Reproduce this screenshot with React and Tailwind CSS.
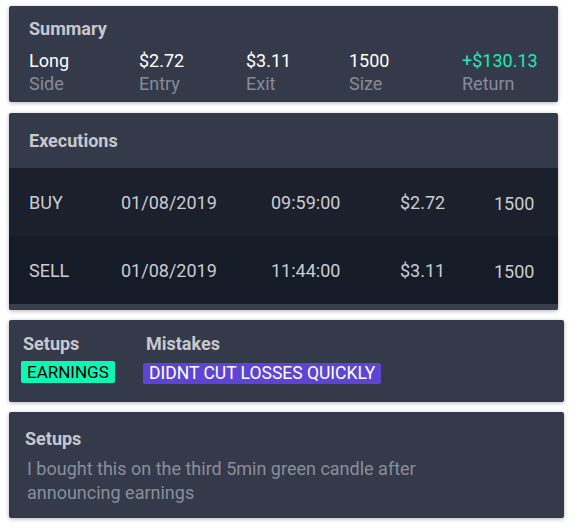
const SUMMARY = [
  { value: 'Long', label: 'Side' },
  { value: '$2.72', label: 'Entry' },
  { value: '$3.11', label: 'Exit' },
  { value: '1500', label: 'Size' },
  { value: '+$130.13', label: 'Return', positive: true },
];

const EXECUTIONS = [
  { side: 'BUY', date: '01/08/2019', time: '09:59:00', price: '$2.72', size: '1500', bg: 'bg-[#1c202c]' },
  { side: 'SELL', date: '01/08/2019', time: '11:44:00', price: '$3.11', size: '1500', bg: 'bg-[#161b28]' },
];

const card = 'bg-[#353a4a] rounded-[2px] shadow-[0_1px_4px_rgba(0,0,0,0.3)]';

export default function App() {
  return (
    <div
      className="min-h-screen bg-white pt-[6px] pl-[9px]"
      style={{ fontFamily: 'Roboto, "Liberation Sans", sans-serif' }}
    >
      {/* Summary */}
      <div className={`${card} w-[549px] h-[96px] px-5 pt-[11px]`}>
        <div className="text-[18px] leading-6 font-bold text-[#c6c8cd]">Summary</div>
        <div className="mt-2 grid grid-cols-[110px_107px_103px_113px_1fr]">
          {SUMMARY.map(item => (
            <div key={item.label}>
              <div className={`text-[18px] leading-6 ${item.positive ? 'text-[#1de9b6]' : 'text-white'}`}>
                {item.value}
              </div>
              <div className="text-[18px] leading-[22px] text-[#878b97]">{item.label}</div>
            </div>
          ))}
        </div>
      </div>

      {/* Executions */}
      <div className={`${card} w-[549px] mt-[11px] overflow-hidden`}>
        <div className="h-[55px] pl-5 flex items-center">
          <span className="text-[18px] font-bold text-[#c6c8cd]">Executions</span>
        </div>
        {EXECUTIONS.map(row => (
          <div
            key={row.side}
            className={`${row.bg} h-[68px] pl-5 grid grid-cols-[92px_150px_129px_94px_1fr] items-center text-[18px] text-[#c9ccd3]`}
          >
            <span>{row.side}</span>
            <span>{row.date}</span>
            <span>{row.time}</span>
            <span>{row.price}</span>
            <span className="pt-[2px]">{row.size}</span>
          </div>
        ))}
        <div className="h-[6px] bg-[#393e4d]" />
      </div>

      {/* Tags */}
      <div className={`${card} w-[555px] h-[82px] mt-[10px] pl-3 pt-3 flex`}>
        <div className="w-[122px]">
          <div className="ml-[2px] text-[18px] leading-6 font-bold text-[#c6c8cd]">Setups</div>
          <span className="mt-[5px] inline-block rounded-[2px] bg-[#0ff5b4] px-[6px] h-[22px] leading-[22px] text-[17px] text-black">
            EARNINGS
          </span>
        </div>
        <div>
          <div className="ml-[3px] text-[18px] leading-6 font-bold text-[#c6c8cd]">Mistakes</div>
          <span className="mt-[7px] inline-block rounded-[2px] bg-[#5e44d2] px-[6px] h-[21px] leading-[21px] text-[17.5px] text-white">
            DIDNT CUT LOSSES QUICKLY
          </span>
        </div>
      </div>

      {/* Notes */}
      <div className={`${card} w-[555px] h-[106px] mt-[10px] pl-4 pt-[15px]`}>
        <div className="text-[18px] leading-6 font-bold text-[#c6c8cd]">Setups</div>
        <p className="mt-[6px] max-w-[440px] pl-[2px] text-[18px] leading-6 text-[#8a8e99]">
          I bought this on the third 5min green candle after announcing earnings
        </p>
      </div>
    </div>
  );
}
